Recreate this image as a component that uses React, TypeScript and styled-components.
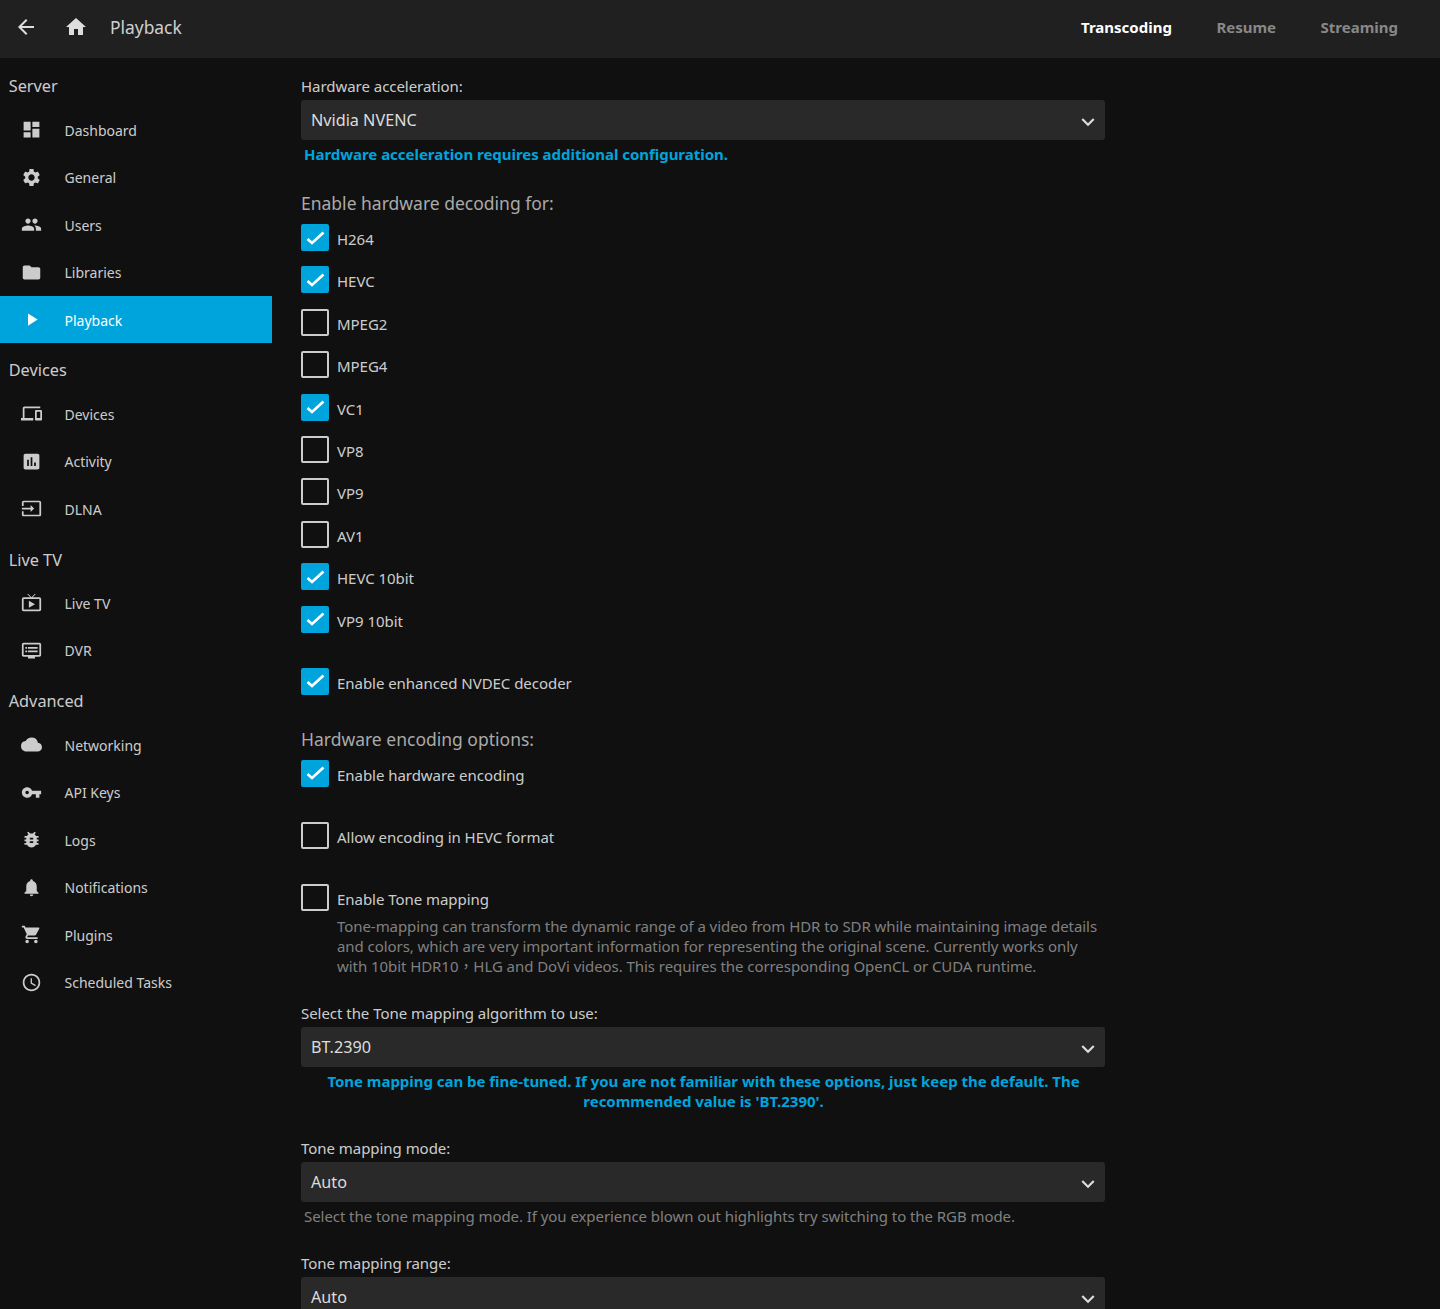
import styled, { createGlobalStyle } from 'styled-components';
import { ReactNode } from 'react';
import {
  MdArrowBack,
  MdHome,
  MdDashboard,
  MdSettings,
  MdPeople,
  MdFolder,
  MdPlayArrow,
  MdDevices,
  MdAssessment,
  MdInput,
  MdLiveTv,
  MdDvr,
  MdCloud,
  MdVpnKey,
  MdBugReport,
  MdNotifications,
  MdShoppingCart,
  MdSchedule,
  MdKeyboardArrowDown,
} from 'react-icons/md';

const GlobalStyle = createGlobalStyle`
  html, body {
    margin: 0;
    height: 1309px;
    overflow: hidden;
    background: #101010;
  }
  * {
    box-sizing: border-box;
  }
`;

const Page = styled.div`
  height: 1309px;
  overflow: hidden;
  background: #101010;
  color: rgba(255, 255, 255, 0.8);
  font-family: 'Noto Sans', 'Noto Sans CJK TC', sans-serif;
  font-size: 14px;
`;

const Header = styled.header`
  display: flex;
  align-items: center;
  height: 58px;
  padding-bottom: 4px;
  background: #202020;
`;

const BackIcon = styled.span`
  display: flex;
  color: #ddd;
  font-size: 24px;
  margin-left: 14px;
  margin-right: 26px;
`;

const HomeIcon = styled(BackIcon)`
  margin-left: 0;
  margin-right: 22px;
`;

const PageTitle = styled.div`
  font-size: 17.4px;
  color: rgba(255, 255, 255, 0.8);
`;

const Tabs = styled.nav`
  display: flex;
  gap: 44.5px;
  margin-left: auto;
  margin-right: 42px;
`;

const Tab = styled.div<{ $active?: boolean }>`
  font-size: 15px;
  font-weight: 700;
  color: ${(p) => (p.$active ? '#fff' : '#888')};
`;

const Body = styled.div`
  display: flex;
`;

const SideBar = styled.aside`
  flex: none;
  width: 272px;
  padding-top: 1.4px;
`;

const SectionTitle = styled.div`
  height: 46.6px;
  padding: 15px 0 0 8.7px;
  font-size: 16.3px;
  line-height: 24px;
  color: rgba(255, 255, 255, 0.8);
`;

const NavRow = styled.div<{ $active?: boolean }>`
  display: flex;
  align-items: center;
  height: 47.5px;
  padding: 1px 0 0 19.5px;
  font-size: 14px;
  background: ${(p) => (p.$active ? '#00a4dc' : 'transparent')};
  color: ${(p) => (p.$active ? '#fff' : 'rgba(255, 255, 255, 0.8)')};
`;

const NavIcon = styled.span<{ $active?: boolean }>`
  display: flex;
  justify-content: center;
  width: 24px;
  margin-right: 21px;
  margin-bottom: 1px;
  font-size: 21px;
  color: ${(p) => (p.$active ? '#fff' : '#ccc')};
`;

const Main = styled.main`
  width: 804px;
  margin-left: 29px;
`;

const FieldLabel = styled.div`
  height: 28px;
  padding-top: 4px;
  font-size: 15px;
  line-height: 20px;
  letter-spacing: -0.04px;
  white-space: nowrap;
`;

const SelectBox = styled.div`
  display: flex;
  align-items: center;
  justify-content: space-between;
  height: 40px;
  padding: 0 4.5px 0 10px;
  background: #292929;
  border-radius: 3px;
  font-size: 16.2px;
  color: rgba(255, 255, 255, 0.85);
`;

const Chevron = styled.span`
  display: flex;
  font-size: 26px;
  color: #ddd;
  margin-top: 4px;
`;

const Help = styled.div<{ $center?: boolean; $info?: boolean }>`
  padding: 4px 2px 0 3px;
  font-size: 15px;
  line-height: 20px;
  letter-spacing: ${(p) => (p.$info ? '-0.03px' : '-0.06px')};
  font-weight: ${(p) => (p.$info ? 700 : 400)};
  color: ${(p) => (p.$info ? '#00a4dc' : '#808080')};
  text-align: ${(p) => (p.$center ? 'center' : 'left')};
`;

const GroupTitle = styled.div<{ $top: number }>`
  margin-top: ${(p) => p.$top}px;
  height: 33px;
  font-size: 17.5px;
  line-height: 24px;
  color: #aaa;
`;

const CheckRow = styled.div<{ $height?: number }>`
  display: flex;
  align-items: flex-start;
  height: ${(p) => p.$height ?? 42.4}px;
`;

const Box = styled.span<{ $checked?: boolean }>`
  display: flex;
  align-items: center;
  justify-content: center;
  flex: none;
  width: 28px;
  height: 27px;
  border-radius: 2px;
  border: 2px solid ${(p) => (p.$checked ? '#00a4dc' : '#ccc')};
  background: ${(p) => (p.$checked ? '#00a4dc' : 'transparent')};
`;

const CheckText = styled.span`
  margin-left: 8px;
  padding-top: 5px;
  font-size: 15px;
  line-height: 20px;
  letter-spacing: -0.04px;
  white-space: nowrap;
`;

const CheckDesc = styled.div`
  margin-left: 36px;
  padding-bottom: 23px;
  font-size: 15px;
  line-height: 20px;
  letter-spacing: -0.06px;
  color: #808080;
`;

const Field = styled.div<{ $top?: number }>`
  margin-top: ${(p) => p.$top ?? 0}px;
`;

function Tick() {
  return (
    <svg width="20" height="20" viewBox="0 0 20 20" fill="none">
      <path d="M2.5 11 L7 15 L18.5 4.5" stroke="#fff" strokeWidth="2.6" />
    </svg>
  );
}

function Check({ label, checked, height }: { label: string; checked?: boolean; height?: number }) {
  return (
    <CheckRow $height={height}>
      <Box $checked={checked}>{checked && <Tick />}</Box>
      <CheckText>{label}</CheckText>
    </CheckRow>
  );
}

function Select({ value }: { value: string }) {
  return (
    <SelectBox>
      {value}
      <Chevron>
        <MdKeyboardArrowDown />
      </Chevron>
    </SelectBox>
  );
}

function Nav({ icon, label, active }: { icon: ReactNode; label: string; active?: boolean }) {
  return (
    <NavRow $active={active}>
      <NavIcon $active={active}>{icon}</NavIcon>
      {label}
    </NavRow>
  );
}

const codecs: [string, boolean][] = [
  ['H264', true],
  ['HEVC', true],
  ['MPEG2', false],
  ['MPEG4', false],
  ['VC1', true],
  ['VP8', false],
  ['VP9', false],
  ['AV1', false],
  ['HEVC 10bit', true],
  ['VP9 10bit', true],
];

export default function App() {
  return (
    <Page>
      <GlobalStyle />
      <Header>
        <BackIcon>
          <MdArrowBack />
        </BackIcon>
        <HomeIcon>
          <MdHome />
        </HomeIcon>
        <PageTitle>Playback</PageTitle>
        <Tabs>
          <Tab $active>Transcoding</Tab>
          <Tab>Resume</Tab>
          <Tab>Streaming</Tab>
        </Tabs>
      </Header>
      <Body>
        <SideBar>
          <SectionTitle>Server</SectionTitle>
          <Nav icon={<MdDashboard />} label="Dashboard" />
          <Nav icon={<MdSettings />} label="General" />
          <Nav icon={<MdPeople />} label="Users" />
          <Nav icon={<MdFolder />} label="Libraries" />
          <Nav icon={<MdPlayArrow />} label="Playback" active />
          <SectionTitle>Devices</SectionTitle>
          <Nav icon={<MdDevices />} label="Devices" />
          <Nav icon={<MdAssessment />} label="Activity" />
          <Nav icon={<MdInput />} label="DLNA" />
          <SectionTitle>Live TV</SectionTitle>
          <Nav icon={<MdLiveTv />} label="Live TV" />
          <Nav icon={<MdDvr />} label="DVR" />
          <SectionTitle>Advanced</SectionTitle>
          <Nav icon={<MdCloud />} label="Networking" />
          <Nav icon={<MdVpnKey />} label="API Keys" />
          <Nav icon={<MdBugReport />} label="Logs" />
          <Nav icon={<MdNotifications />} label="Notifications" />
          <Nav icon={<MdShoppingCart />} label="Plugins" />
          <Nav icon={<MdSchedule />} label="Scheduled Tasks" />
        </SideBar>
        <Main>
          <Field $top={14}>
            <FieldLabel>Hardware acceleration:</FieldLabel>
            <Select value="Nvidia NVENC" />
            <Help $info>Hardware acceleration requires additional configuration.</Help>
          </Field>
          <GroupTitle $top={27}>Enable hardware decoding for:</GroupTitle>
          {codecs.map(([label, checked]) => (
            <Check key={label} label={label} checked={checked} />
          ))}
          <Field $top={20}>
            <Check label="Enable enhanced NVDEC decoder" checked height={43} />
          </Field>
          <GroupTitle $top={16}>Hardware encoding options:</GroupTitle>
          <Check label="Enable hardware encoding" checked height={62} />
          <Check label="Allow encoding in HEVC format" height={62} />
          <Check label="Enable Tone mapping" height={32} />
          <CheckDesc>
            Tone-mapping can transform the dynamic range of a video from HDR to SDR while maintaining
            image details and colors, which are very important information for representing the
            original scene. Currently works only with 10bit HDR10，HLG and DoVi videos. This requires
            the corresponding OpenCL or CUDA runtime.
          </CheckDesc>
          <FieldLabel>Select the Tone mapping algorithm to use:</FieldLabel>
          <Select value="BT.2390" />
          <Help $info $center>
            Tone mapping can be fine-tuned. If you are not familiar with these options, just keep the
            default. The recommended value is 'BT.2390'.
          </Help>
          <Field $top={23}>
            <FieldLabel>Tone mapping mode:</FieldLabel>
            <Select value="Auto" />
            <Help>Select the tone mapping mode. If you experience blown out highlights try switching to the RGB mode.</Help>
          </Field>
          <Field $top={23}>
            <FieldLabel>Tone mapping range:</FieldLabel>
            <Select value="Auto" />
          </Field>
        </Main>
      </Body>
    </Page>
  );
}
